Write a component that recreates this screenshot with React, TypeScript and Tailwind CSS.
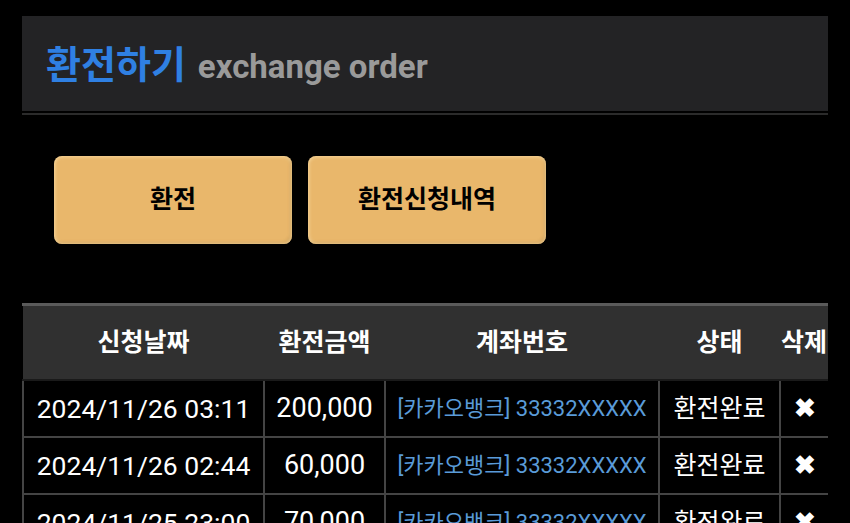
const rows = [
  { date: '2024/11/26 03:11', amount: '200,000', account: '[카카오뱅크] 33332XXXXX', status: '환전완료' },
  { date: '2024/11/26 02:44', amount: '60,000', account: '[카카오뱅크] 33332XXXXX', status: '환전완료' },
  { date: '2024/11/25 23:00', amount: '70,000', account: '[카카오뱅크] 33332XXXXX', status: '환전완료' },
];

const font = { fontFamily: "Roboto, 'Noto Sans CJK KR', sans-serif" };

export default function App() {
  return (
    <div className="min-h-[523px] w-[850px] overflow-hidden bg-black pt-4" style={font}>
      <div className="mx-[22px]">
        {/* title bar */}
        <div className="flex h-[95px] items-center bg-[#232325] pl-6">
          <h1 className="flex items-baseline gap-3 pt-1">
            <span className="text-[38px] font-bold text-[#2f80e3]">환전하기</span>
            <span className="text-[33px] font-bold text-[#9a9a9a]">exchange order</span>
          </h1>
        </div>
        <div className="mt-[2px] h-[2px] bg-[#2b2b2b]" />

        {/* tabs */}
        <div className="mt-[41px] flex gap-4 pl-8">
          <button className="h-[88px] w-[238px] rounded-lg bg-[#e9b76b] text-[25px] font-bold text-black shadow-[inset_0_0_4px_rgba(255,235,190,0.9),inset_-2px_-2px_3px_rgba(150,100,30,0.35)]">
            환전
          </button>
          <button className="h-[88px] w-[238px] rounded-lg bg-[#e9b76b] text-[25px] font-bold text-black shadow-[inset_0_0_4px_rgba(255,235,190,0.9),inset_-2px_-2px_3px_rgba(150,100,30,0.35)]">
            환전신청내역
          </button>
        </div>

        {/* history table */}
        <div className="mt-[59px] overflow-hidden border-t-[3px] border-[#5a5a5a]">
          <table className="w-[830px] table-fixed border-collapse">
            <colgroup>
              <col className="w-[241px]" />
              <col className="w-[121px]" />
              <col className="w-[274px]" />
              <col className="w-[121px]" />
              <col className="w-[73px]" />
            </colgroup>
            <thead>
              <tr className="h-[74px] bg-[#303030] text-[25px] font-bold text-white">
                <th className="border-b-2 border-[#1a1a1a] text-center">신청날짜</th>
                <th className="border-b-2 border-[#1a1a1a] text-center">환전금액</th>
                <th className="border-b-2 border-[#1a1a1a] text-center">계좌번호</th>
                <th className="border-b-2 border-[#1a1a1a] text-center">상태</th>
                <th className="border-b-2 border-[#1a1a1a] text-left pl-[1px] whitespace-nowrap">삭제</th>
              </tr>
            </thead>
            <tbody>
              {rows.map((r, i) => (
                <tr key={i} className="h-[57px] text-white">
                  <td className="border-2 border-[#444] text-center text-[26.5px] whitespace-nowrap">{r.date}</td>
                  <td className="border-2 border-[#444] text-center text-[27px]">{r.amount}</td>
                  <td className="border-2 border-[#444] text-center text-[22px] text-[#5a9bd8] whitespace-nowrap">{r.account}</td>
                  <td className="border-2 border-[#444] text-center text-[25px]">{r.status}</td>
                  <td className="border-2 border-[#444] pl-[13px] text-left text-[26px] font-bold">✖</td>
                </tr>
              ))}
            </tbody>
          </table>
        </div>
      </div>
    </div>
  );
}
